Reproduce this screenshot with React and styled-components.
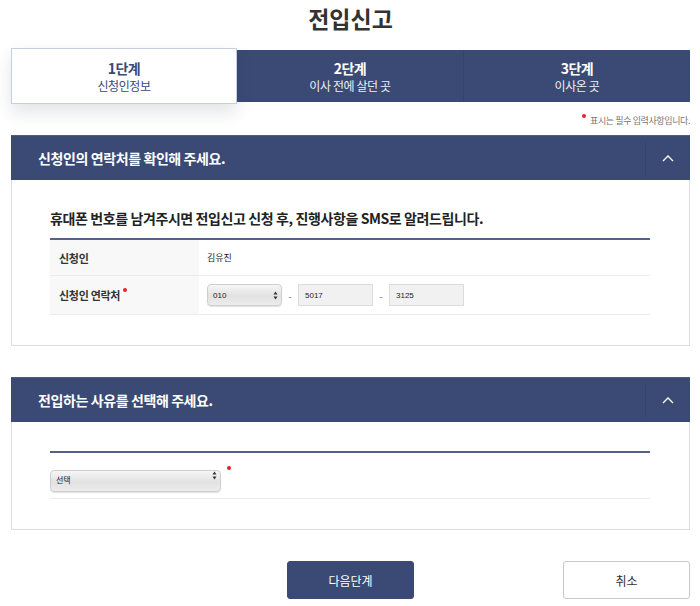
import styled, { createGlobalStyle } from "styled-components";

const Global = createGlobalStyle`
  * { box-sizing: border-box; }
  body {
    margin: 0;
    background: #fff;
    font-family: "Noto Sans CJK KR", "Noto Sans", sans-serif;
    color: #333;
  }
`;

const NAVY = "#3a4a75";

export default function App() {
  return (
    <>
      <Global />
      <Page>
        <Title>전입신고</Title>
        <Steps>
          <Step $active>
            <strong>1단계</strong>
            <span>신청인정보</span>
          </Step>
          <Step>
            <strong>2단계</strong>
            <span>이사 전에 살던 곳</span>
          </Step>
          <Step $last>
            <strong>3단계</strong>
            <span>이사온 곳</span>
          </Step>
        </Steps>
        <Note>
          <Dot />표시는 필수 입력사항입니다.
        </Note>

        <Section>
          <SectionHead>
            <h2>신청인의 연락처를 확인해 주세요.</h2>
            <Toggle><Chevron /></Toggle>
          </SectionHead>
          <SectionBody $top={28}>
            <Lead>휴대폰 번호를 남겨주시면 전입신고 신청 후, 진행사항을 SMS로 알려드립니다.</Lead>
            <Table>
              <Row $h={36}>
                <Label>신청인</Label>
                <Value>김유진</Value>
              </Row>
              <Row $h={39}>
                <Label>신청인 연락처<Dot $label /></Label>
                <Value>
                  <SelectBox $w={75}>
                    <select defaultValue="010">
                      <option>010</option>
                    </select>
                    <Arrows />
                  </SelectBox>
                  <Dash>-</Dash>
                  <Input defaultValue="5017" />
                  <Dash>-</Dash>
                  <Input defaultValue="3125" />
                </Value>
              </Row>
            </Table>
          </SectionBody>
        </Section>

        <Section $gap={31}>
          <SectionHead>
            <h2>전입하는 사유를 선택해 주세요.</h2>
            <Toggle><Chevron /></Toggle>
          </SectionHead>
          <SectionBody $top={29}>
            <Table>
              <ReasonRow>
                <SelectBox $w={171}>
                  <select defaultValue="선택">
                    <option>선택</option>
                  </select>
                  <Arrows />
                </SelectBox>
                <Dot $reason />
              </ReasonRow>
            </Table>
          </SectionBody>
        </Section>

        <Buttons>
          <Button $primary>다음단계</Button>
          <Button>취소</Button>
        </Buttons>
      </Page>
    </>
  );
}

function Chevron() {
  return (
    <svg width="12" height="8" viewBox="0 0 12 8">
      <path d="M1 7 L6 2 L11 7" fill="none" stroke="#fff" strokeWidth="1.3" />
    </svg>
  );
}

function Arrows() {
  return (
    <ArrowIcon width="5" height="9" viewBox="0 0 5 9">
      <path d="M2.5 0.5 L4.5 3.5 L0.5 3.5 Z M2.5 8.5 L4.5 5.5 L0.5 5.5 Z" fill="#333" />
    </ArrowIcon>
  );
}

const Page = styled.div`
  width: 679px;
  margin: 0 10px 0 11px;
`;

const Title = styled.h1`
  margin: 0;
  height: 48px;
  padding-top: 2px;
  text-align: center;
  font-size: 23px;
  font-weight: 700;
  line-height: 32px;
  color: #333;
`;

const Steps = styled.div`
  display: grid;
  grid-template-columns: 226px 227px 1fr;
  height: 56px;
`;

const Step = styled.div`
  display: flex;
  flex-direction: column;
  align-items: center;
  justify-content: center;
  background: ${(p) => (p.$active ? "#fff" : NAVY)};
  color: ${(p) => (p.$active ? NAVY : "#fff")};
  border: ${(p) => (p.$active ? "1px solid #c5cde0" : "none")};
  border-right: ${(p) => (p.$active || p.$last ? "" : "1px solid #34436b")};
  margin: ${(p) => (p.$active ? "0" : "2px 0")};
  box-shadow: ${(p) => (p.$active ? "0 8px 16px rgba(40, 50, 80, 0.13)" : "none")};
  position: relative;
  z-index: ${(p) => (p.$active ? 1 : 0)};
  strong {
    font-size: 14px;
    font-weight: 700;
    line-height: 18px;
    letter-spacing: -0.5px;
  }
  span {
    font-size: 12px;
    line-height: 17px;
    letter-spacing: -0.4px;
    opacity: ${(p) => (p.$active ? 1 : 0.92)};
  }
`;

const Note = styled.div`
  height: 31px;
  padding-top: 10px;
  text-align: right;
  font-size: 9px;
  color: #777;
  letter-spacing: -0.4px;
`;

const Dot = styled.span`
  display: inline-block;
  flex: none;
  width: 4px;
  height: 4px;
  border-radius: 50%;
  background: #e0242b;
  vertical-align: top;
  margin: ${(p) => (p.$label ? "12px 0 0 3px" : p.$reason ? "2px 0 0 6px" : "0 4px 0 0")};
  align-self: ${(p) => (p.$label || p.$reason ? "flex-start" : "auto")};
`;

const Section = styled.section`
  margin-top: ${(p) => p.$gap || 0}px;
`;

const SectionHead = styled.div`
  display: flex;
  align-items: center;
  height: 45px;
  background: ${NAVY};
  border-top: 1px solid #4d5c85;
  h2 {
    flex: 1;
    margin: 0;
    padding-left: 27px;
    font-size: 14px;
    font-weight: 700;
    color: #fff;
    letter-spacing: -0.4px;
  }
`;

const Toggle = styled.div`
  width: 45px;
  height: 33px;
  display: flex;
  align-items: center;
  justify-content: center;
  border-left: 1px solid #34436a;
`;

const SectionBody = styled.div`
  border: 1px solid #dcdcdc;
  border-top: none;
  padding: ${(p) => p.$top}px 39px 30px 38px;
`;

const Lead = styled.p`
  margin: 0 0 10px;
  font-size: 14px;
  font-weight: 700;
  color: #222;
  letter-spacing: -0.4px;
  line-height: 20px;
`;

const Table = styled.div`
  border-top: 2px solid #56618a;
`;

const Row = styled.div`
  display: grid;
  grid-template-columns: 149px 1fr;
  height: ${(p) => p.$h}px;
  border-bottom: 1px solid #ececec;
`;

const Label = styled.div`
  display: flex;
  align-items: center;
  padding-left: 9px;
  background: #f8f8f8;
  font-size: 11px;
  font-weight: 700;
  color: #333;
  letter-spacing: -0.3px;
`;

const Value = styled.div`
  display: flex;
  align-items: center;
  padding-left: 8px;
  font-size: 9px;
  color: #222;
`;

const SelectBox = styled.div`
  position: relative;
  width: ${(p) => p.$w}px;
  height: 22px;
  select {
    appearance: none;
    width: 100%;
    height: 100%;
    border: 1px solid #cfcfcf;
    border-radius: 4px;
    background: linear-gradient(#f6f6f6, #e2e2e2 55%, #ececec);
    box-shadow: 0 1px 1px rgba(0, 0, 0, 0.12);
    padding: 0 0 0 5px;
    font-family: "Liberation Sans", "Noto Sans CJK KR", sans-serif;
    font-size: 8px;
    color: #222;
    outline: none;
  }
`;

const ArrowIcon = styled.svg`
  position: absolute;
  right: 4px;
  top: 7px;
  pointer-events: none;
`;

const Dash = styled.span`
  width: 16px;
  text-align: center;
  font-size: 10px;
  color: #777;
`;

const Input = styled.input`
  width: 75px;
  height: 22px;
  border: 1px solid #dcdcdc;
  background: #f1f1f1;
  padding: 0 6px;
  font-family: "Liberation Sans", sans-serif;
  font-size: 8px;
  color: #222;
  outline: none;
`;

const ReasonRow = styled.div`
  display: flex;
  align-items: flex-start;
  height: 46px;
  padding-top: 11px;
  border-bottom: 1px solid #ececec;
`;

const Buttons = styled.div`
  display: flex;
  justify-content: space-between;
  padding: 31px 0 0 276px;
`;

const Button = styled.button`
  width: 127px;
  height: 38px;
  border-radius: 3px;
  border: 1px solid ${(p) => (p.$primary ? NAVY : "#c8c8c8")};
  background: ${(p) => (p.$primary ? NAVY : "#fff")};
  color: ${(p) => (p.$primary ? "#fff" : "#333")};
  font-family: "Noto Sans CJK KR", sans-serif;
  font-size: 12px;
  cursor: pointer;
`;
